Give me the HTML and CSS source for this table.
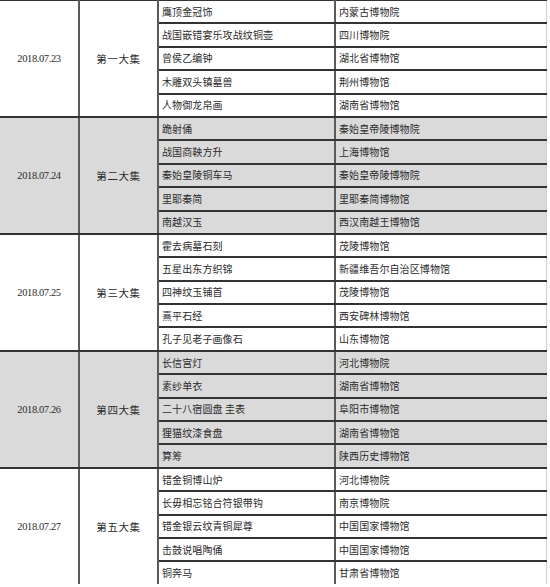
FILE: index.html
```html
<!DOCTYPE html>
<html lang="zh">
<head>
<meta charset="utf-8">
<link rel="stylesheet" href="styles.css">
</head>
<body>
<table class="sched">
  <colgroup>
    <col class="c-date"><col class="c-ep"><col class="c-item"><col class="c-mus">
  </colgroup>
  <tbody class="grp">
    <tr><td class="date" rowspan="5">2018.07.23</td><td class="ep" rowspan="5">第一大集</td><td class="item">鹰顶金冠饰</td><td class="mus">内蒙古博物院</td></tr>
    <tr><td class="item">战国嵌错宴乐攻战纹铜壶</td><td class="mus">四川博物院</td></tr>
    <tr><td class="item">曾侯乙编钟</td><td class="mus">湖北省博物馆</td></tr>
    <tr><td class="item">木雕双头镇墓兽</td><td class="mus">荆州博物馆</td></tr>
    <tr><td class="item">人物御龙帛画</td><td class="mus">湖南省博物馆</td></tr>
  </tbody>
  <tbody class="grp alt">
    <tr><td class="date" rowspan="5">2018.07.24</td><td class="ep" rowspan="5">第二大集</td><td class="item">跪射俑</td><td class="mus">秦始皇帝陵博物院</td></tr>
    <tr><td class="item">战国商鞅方升</td><td class="mus">上海博物馆</td></tr>
    <tr><td class="item">秦始皇陵铜车马</td><td class="mus">秦始皇帝陵博物院</td></tr>
    <tr><td class="item">里耶秦简</td><td class="mus">里耶秦简博物馆</td></tr>
    <tr><td class="item">南越汉玉</td><td class="mus">西汉南越王博物馆</td></tr>
  </tbody>
  <tbody class="grp">
    <tr><td class="date" rowspan="5">2018.07.25</td><td class="ep" rowspan="5">第三大集</td><td class="item">霍去病墓石刻</td><td class="mus">茂陵博物馆</td></tr>
    <tr><td class="item">五星出东方织锦</td><td class="mus">新疆维吾尔自治区博物馆</td></tr>
    <tr><td class="item">四神纹玉铺首</td><td class="mus">茂陵博物馆</td></tr>
    <tr><td class="item">熹平石经</td><td class="mus">西安碑林博物馆</td></tr>
    <tr><td class="item">孔子见老子画像石</td><td class="mus">山东博物馆</td></tr>
  </tbody>
  <tbody class="grp alt">
    <tr><td class="date" rowspan="5">2018.07.26</td><td class="ep" rowspan="5">第四大集</td><td class="item">长信宫灯</td><td class="mus">河北博物院</td></tr>
    <tr><td class="item">素纱单衣</td><td class="mus">湖南省博物馆</td></tr>
    <tr><td class="item">二十八宿圆盘 圭表</td><td class="mus">阜阳市博物馆</td></tr>
    <tr><td class="item">狸猫纹漆食盘</td><td class="mus">湖南省博物馆</td></tr>
    <tr><td class="item">算筹</td><td class="mus">陕西历史博物馆</td></tr>
  </tbody>
  <tbody class="grp last">
    <tr><td class="date" rowspan="5">2018.07.27</td><td class="ep" rowspan="5">第五大集</td><td class="item">错金铜博山炉</td><td class="mus">河北博物院</td></tr>
    <tr><td class="item">长毋相忘铭合符银带钩</td><td class="mus">南京博物院</td></tr>
    <tr><td class="item">错金银云纹青铜犀尊</td><td class="mus">中国国家博物馆</td></tr>
    <tr><td class="item">击鼓说唱陶俑</td><td class="mus">中国国家博物馆</td></tr>
    <tr><td class="item">铜奔马</td><td class="mus">甘肃省博物馆</td></tr>
  </tbody>
</table>
</body>
</html>
```
FILE: styles.css
```css
html, body {
  margin: 0;
  padding: 0;
  background: #ffffff;
}
body {
  overflow: hidden;
  font-family: "Liberation Serif", "Noto Sans CJK SC", serif;
  color: #2b2b2b;
}
.sched {
  border-collapse: collapse;
  table-layout: fixed;
  width: 546px;
  margin-top: -1px;
}
.c-date { width: 79px; }
.c-ep { width: 79px; }
.c-item { width: 177px; }
.c-mus { width: 211px; }

.sched td {
  height: 21.4px;
  padding: 0;
  border-top: 2px solid #333;
  border-bottom: 2px solid #333;
  border-left: 2px solid #5a5a5a;
  border-right: 2px solid #5a5a5a;
  font-size: 10px;
  line-height: 12px;
  white-space: nowrap;
  overflow: hidden;
  vertical-align: middle;
}
.sched td.date {
  border-left: none;
  text-align: center;
  font-size: 10.5px;
  letter-spacing: -0.4px;
  font-family: "Liberation Serif", serif;
  padding-top: 2px;
}
.sched td.ep {
  text-align: center;
  font-family: "Noto Sans CJK SC", sans-serif;
  font-size: 10.5px;
  letter-spacing: 0.6px;
  padding-top: 2px;
}
.sched td.item,
.sched td.mus {
  font-family: "Noto Sans CJK SC", sans-serif;
  padding-left: 3px;
  font-size: 10px;
  letter-spacing: 0.1px;
}
.sched td.mus {
  border-right: 1px solid #cfcfcf;
}
.sched tbody.grp:first-child tr:first-child td {
  border-top: none;
}
.sched tbody.last tr:last-child td,
.sched tbody.last td.date,
.sched tbody.last td.ep {
  border-bottom: none;
}
.alt td {
  background: #dadada;
}
```
